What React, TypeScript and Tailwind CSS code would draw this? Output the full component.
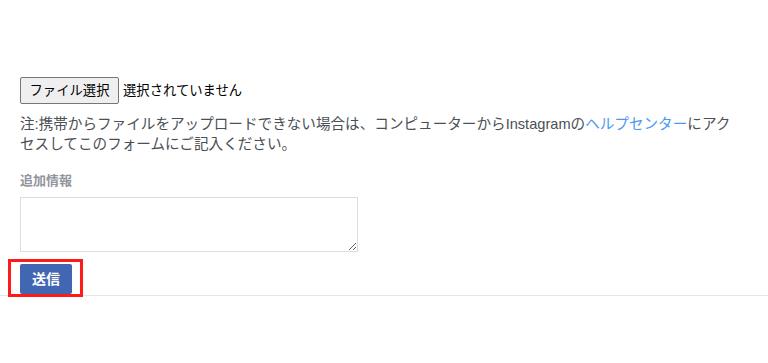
import React from "react";

export default function App() {
  const font = { fontFamily: '"Liberation Sans", "Noto Sans CJK JP", sans-serif' };
  return (
    <div className="w-[768px] h-[363px] bg-white" style={font}>
      <div className="pt-[77px] border-b border-[#e5e5e5] pl-[20px]">
        <div className="flex items-center h-[27px]">
          <div className="h-[27px] w-[99px] flex items-center justify-center bg-[#efefef] border border-[#767676] rounded-[2px] text-[13.33px] text-black">
            ファイル選択
          </div>
          <span className="ml-[4px] text-[13.33px] text-black">選択されていません</span>
        </div>
        <p className="mt-[10px] w-[718px] text-[14.6px] leading-[20px] text-[#4b4f56]">
          注:携帯からファイルをアップロードできない場合は、コンピューターからInstagramの
          <a className="text-[#4a9af0]">ヘルプセンター</a>
          にアクセスしてこのフォームにご記入ください。
        </p>
        <div className="mt-[19px] text-[13px] leading-[16px] font-bold text-[#90949c]">追加情報</div>
        <textarea className="mt-[8px] block w-[338px] h-[55px] border border-[#dadde1] bg-white outline-none" />
        <div className="relative mt-[12px] w-[52px] h-[31px]">
          <div className="absolute left-[-12px] top-[-5px] w-[75px] h-[38px] border-[3px] border-[#ff1a1a] bg-white" />
          <button className="relative w-[52px] h-[30px] bg-[#4267b2] rounded-[2px] text-white font-bold text-[14px]">
            送信
          </button>
        </div>
      </div>
    </div>
  );
}
